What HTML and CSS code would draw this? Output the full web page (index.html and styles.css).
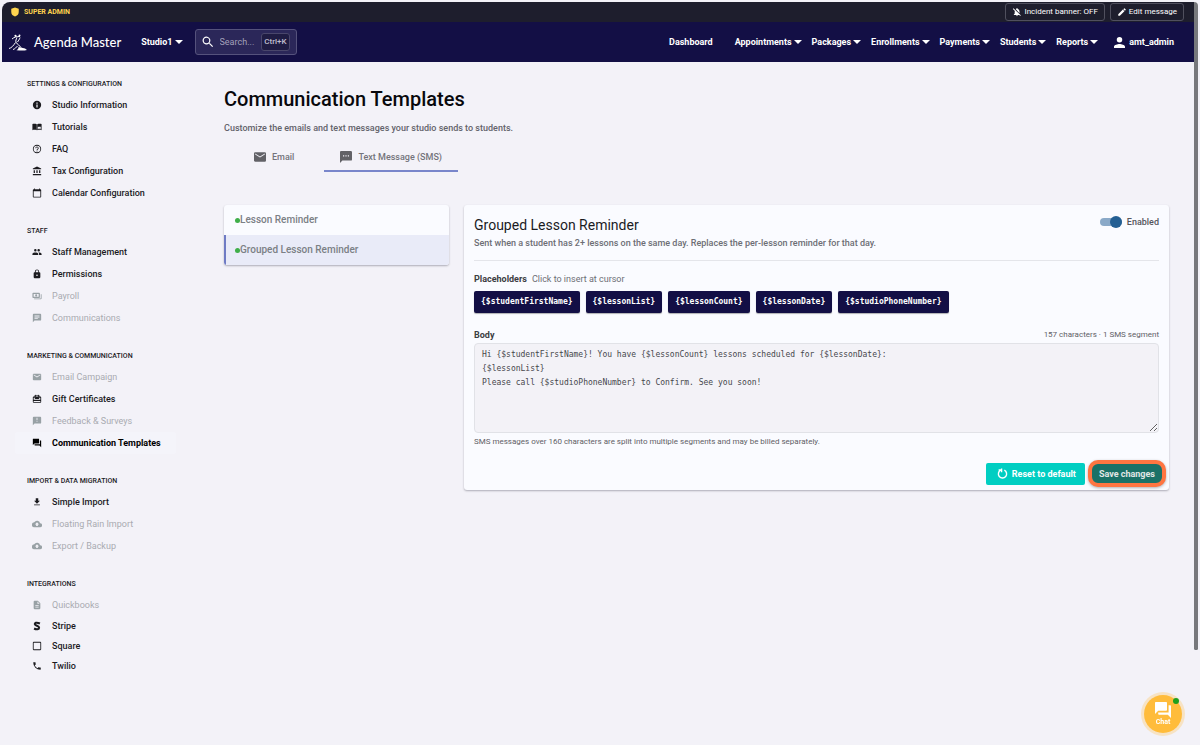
FILE: index.html
```html
<!DOCTYPE html>
<html lang="en">
<head>
<meta charset="utf-8">
<meta name="viewport" content="width=device-width, initial-scale=1">
<title>Communication Templates - Agenda Master</title>
<link rel="stylesheet" href="styles.css">
</head>
<body>
<div class="frame">
  <div class="app">
    <div class="adminbar">
      <span class="role"><svg class="i-shield" viewBox="0 0 24 24"><path d="M12 1 3 4v8c0 6 4 9 9 11 5-2 9-5 9-11V4z"/></svg>SUPER ADMIN</span>
      <div class="admin-actions">
        <button class="admin-btn" type="button"><svg class="i10" viewBox="0 0 24 24"><path d="M12 22a2 2 0 0 0 2-2h-4a2 2 0 0 0 2 2zM18 14.700V11c0-3-1.600-5.600-4.500-6.300V4a1.500 1.500 0 0 0-3 0v.700c-.6.100-1 .300-1.500.500zM3.500 3 2 4.500l5 5c-.4.800-.6 1.600-.6 2.500v4l-2 2v1h13l2.300 2.500L21 20z"/></svg>Incident banner: OFF</button>
        <button class="admin-btn" type="button"><svg class="i10" viewBox="0 0 24 24"><path d="M3 17.200V21h3.800L17.800 9.900l-3.700-3.700zM20.700 7c.4-.4.4-1 0-1.400l-2.300-2.300c-.4-.4-1-.4-1.400 0l-1.800 1.800 3.700 3.700z"/></svg>Edit message</button>
      </div>
    </div>
    <header class="topbar">
      <a class="brand" href="#"><svg class="logo" viewBox="0 0 20 17"><path class="logo-line" d="M1 14.500c2.500-.5 4.500-3 6.500-6M4 5c2.500-2 4-2.500 8-2.500M9 3.500c-1 2-1.500 3-1 5 1.500 1.500 3.500 3 5 5M12 3.500c-.5 2-1.500 3-2.500 4.500M5 15.500c2-.5 3-2 4.500-3.500"/><circle cx="7.500" cy="1.800" r="1.100"/><circle cx="11.500" cy="1.600" r="1"/><path d="M10.500 13c3 1 6 .5 8.500 3-3 .9-7 .6-10.500.2 1.500-.7 2-1.700 2-3.200z"/></svg><span>Agenda Master</span></a>
      <button class="menu studio" type="button">Studio1</button>
      <label class="search"><svg class="i-search" viewBox="2 2 20 20"><path d="M15.500 14h-.8l-.3-.3a6.500 6.500 0 1 0-.7.700l.3.300v.8l5 5 1.500-1.500zm-6 0a4.500 4.500 0 1 1 0-9 4.500 4.500 0 0 1 0 9z"/></svg><input type="text" placeholder="Search..." aria-label="Search"><kbd>Ctrl+K</kbd></label>
      <nav class="nav">
        <a class="dash" href="#">Dashboard</a>
        <button class="menu" type="button">Appointments</button>
        <button class="menu" type="button">Packages</button>
        <button class="menu" type="button">Enrollments</button>
        <button class="menu" type="button">Payments</button>
        <button class="menu" type="button">Students</button>
        <button class="menu" type="button">Reports</button>
        <a class="user" href="#"><svg class="i-user" viewBox="4 4 16 16"><path d="M12 12a4 4 0 1 0 0-8 4 4 0 0 0 0 8zm0 2c-2.700 0-8 1.300-8 4v2h16v-2c0-2.700-5.300-4-8-4z"/></svg>amt_admin</a>
      </nav>
    </header>
    <div class="body">
      <aside class="side">
        <section>
          <h2>SETTINGS &amp; CONFIGURATION</h2>
          <a href="#"><svg viewBox="0 0 24 24"><path fill-rule="evenodd" d="M12 2a10 10 0 1 0 0 20 10 10 0 0 0 0-20zm-1.500 4h3v3h-3zm0 5h3v7h-3z"/></svg>Studio Information</a>
          <a href="#"><svg viewBox="0 0 24 24"><path d="M1 5c3-1 7-1 10.500.500V20C8 18.500 4 18.500 1 19.500z"/><path fill-rule="evenodd" d="M12.500 5.500C16 4 20 4 23 5v14.500c-3-1-7-1-10.500.500zM14 12v5c2-.8 5-.8 7-.4v-5c-2-.4-5-.4-7 .4z"/></svg>Tutorials</a>
          <a href="#"><svg viewBox="0 0 24 24"><path d="M11 18h2v-2h-2zM12 2a10 10 0 1 0 0 20 10 10 0 0 0 0-20zm0 18a8 8 0 1 1 0-16 8 8 0 0 1 0 16zm0-14a4 4 0 0 0-4 4h2a2 2 0 1 1 4 0c0 2-3 1.800-3 5h2c0-2.300 3-2.500 3-5a4 4 0 0 0-4-4z"/></svg>FAQ</a>
          <a href="#"><svg viewBox="0 0 24 24"><path d="M4 10v7h3v-7zm6.500 0v7h3v-7zM2 22h20v-3H2zm15-12v7h3v-7zM12 1 2 6v2h20V6z"/></svg>Tax Configuration</a>
          <a href="#"><svg viewBox="0 0 24 24"><path d="M20 3h-1V1h-2v2H7V1H5v2H4a2 2 0 0 0-2 2v16c0 1.100.9 2 2 2h16a2 2 0 0 0 2-2V5a2 2 0 0 0-2-2zm0 18H4V8h16z"/></svg>Calendar Configuration</a>
        </section>
        <section>
          <h2>STAFF</h2>
          <a href="#"><svg viewBox="0 0 24 24"><path d="M16 11a3 3 0 1 0 0-6 3 3 0 0 0 0 6zm-8 0a3 3 0 1 0 0-6 3 3 0 0 0 0 6zm0 2c-2.300 0-7 1.200-7 3.500V19h14v-2.500C15 14.200 10.300 13 8 13zm8 0-1 .1c1.200.8 2 2 2 3.400V19h6v-2.500c0-2.300-4.700-3.500-7-3.500z"/></svg>Staff Management</a>
          <a href="#"><svg viewBox="0 0 24 24"><path fill-rule="evenodd" d="M18 8h-1V6A5 5 0 0 0 7 6v2H6a2 2 0 0 0-2 2v10c0 1.100.9 2 2 2h12a2 2 0 0 0 2-2V10a2 2 0 0 0-2-2zm-6 9a2 2 0 1 1 0-4 2 2 0 0 1 0 4zM9 8V6a3 3 0 0 1 6 0v2z"/></svg>Permissions</a>
          <a class="off" href="#"><svg viewBox="0 0 24 24"><path fill-rule="evenodd" d="M3 4h14a2 2 0 0 1 2 2v9a2 2 0 0 1-2 2H3a2 2 0 0 1-2-2V6c0-1 1-2 2-2zm1 3v7h12V7zm6 1a2.500 2.500 0 1 1 0 5 2.500 2.500 0 0 1 0-5zM21 8h2v10a2 2 0 0 1-2 2H5v-2h16z"/></svg>Payroll</a>
          <a class="off" href="#"><svg viewBox="0 0 24 24"><path fill-rule="evenodd" d="M4 2h16a2 2 0 0 1 2 2v12a2 2 0 0 1-2 2H6l-4 4V4c0-1 1-2 2-2zm2 4v2h12V6zm0 3v2h12V9zm0 3v2h8v-2z"/></svg>Communications</a>
        </section>
        <section>
          <h2>MARKETING &amp; COMMUNICATION</h2>
          <a class="off" href="#"><svg viewBox="0 0 24 24"><path d="M20 4H4a2 2 0 0 0-2 2v12c0 1.100.9 2 2 2h16a2 2 0 0 0 2-2V6a2 2 0 0 0-2-2zm0 4-8 5-8-5V6l8 5 8-5z"/></svg>Email Campaign</a>
          <a href="#"><svg viewBox="0 0 24 24"><path fill-rule="evenodd" d="M20 6h-2c.4-2-1-4-3-4-1.300 0-2.200.6-3 1.500C11.200 2.600 10.300 2 9 2 7 2 5.600 4 6 6H4a2 2 0 0 0-2 2v11c0 1 1 2 2 2h16c1 0 2-1 2-2V8a2 2 0 0 0-2-2zM9 4h6v2H9zM4 14V9h4l-2 3h12l-2-3h4v5zm0 3h16v2H4z"/></svg>Gift Certificates</a>
          <a class="off" href="#"><svg viewBox="0 0 24 24"><path fill-rule="evenodd" d="M4 2h16a2 2 0 0 1 2 2v12a2 2 0 0 1-2 2H6l-4 4V4c0-1 1-2 2-2zm7 2v6h2V4zm0 8v2h2v-2z"/></svg>Feedback &amp; Surveys</a>
          <a class="current" href="#"><svg viewBox="0 0 24 24"><path d="M21 6h-2v9H6v2c0 .6.400 1 1 1h11l4 4V7c0-.6-.4-1-1-1zm-4 6V3c0-.6-.4-1-1-1H3c-.6 0-1 .4-1 1v14l4-4h10c.6 0 1-.4 1-1z"/></svg>Communication Templates</a>
        </section>
        <section>
          <h2>IMPORT &amp; DATA MIGRATION</h2>
          <a href="#"><svg viewBox="0 0 24 24"><path d="M19 9h-4V3H9v6H5l7 7zM5 18v2h14v-2z"/></svg>Simple Import</a>
          <a class="off" href="#"><svg viewBox="0 0 24 24"><path d="M19.400 10A7.500 7.500 0 0 0 5.400 8 6 6 0 0 0 6 20h13a5 5 0 0 0 .4-10zM14 13v4h-4v-4H7l5-5 5 5z"/></svg>Floating Rain Import</a>
          <a class="off" href="#"><svg viewBox="0 0 24 24"><path d="M19.400 10A7.500 7.500 0 0 0 5.400 8 6 6 0 0 0 6 20h13a5 5 0 0 0 .4-10zM14 13v4h-4v-4H7l5-5 5 5z"/></svg>Export / Backup</a>
        </section>
        <section class="tight">
          <h2>INTEGRATIONS</h2>
          <a class="off" href="#"><svg viewBox="0 0 24 24"><path fill-rule="evenodd" d="M14 2H6a2 2 0 0 0-2 2v16c0 1.100.9 2 2 2h12a2 2 0 0 0 2-2V8zm2 16H8v-2h8zm0-4H8v-2h8zm-3-5V3.500L18.500 9z"/></svg>Quickbooks</a>
          <a href="#"><svg viewBox="0 0 24 24"><path class="s-mark" d="M19 6C10 2 6 5 7 8c1 4 10 3 10 8 0 4-6 5-12 2"/></svg>Stripe</a>
          <a href="#"><svg viewBox="0 0 24 24"><path fill-rule="evenodd" d="M4 2h16a2 2 0 0 1 2 2v16a2 2 0 0 1-2 2H4a2 2 0 0 1-2-2V4c0-1 1-2 2-2zm0 2v16h16V4z"/></svg>Square</a>
          <a href="#"><svg viewBox="0 0 24 24"><path d="M6.600 10.800a15 15 0 0 0 6.600 6.600l2.200-2.200c.3-.3.700-.4 1-.2 1.200.4 2.400.6 3.600.6.600 0 1 .4 1 1V20c0 .6-.4 1-1 1A17 17 0 0 1 3 4c0-.6.4-1 1-1h3.500c.6 0 1 .4 1 1 0 1.300.2 2.500.6 3.600.1.300 0 .7-.3 1z"/></svg>Twilio</a>
        </section>
      </aside>
      <main class="main">
        <h1>Communication Templates</h1>
        <p class="lead">Customize the emails and text messages your studio sends to students.</p>
        <div class="tabs" role="tablist">
          <button class="tab" role="tab" type="button"><svg viewBox="2 2 20 20"><path d="M20 4H4a2 2 0 0 0-2 2v12c0 1.100.9 2 2 2h16a2 2 0 0 0 2-2V6a2 2 0 0 0-2-2zm0 4-8 5-8-5V6l8 5 8-5z"/></svg>Email</button>
          <button class="tab active" role="tab" type="button" aria-selected="true"><svg viewBox="2 2 20 20"><path fill-rule="evenodd" d="M4 2h16a2 2 0 0 1 2 2v12a2 2 0 0 1-2 2H6l-4 4V4c0-1 1-2 2-2zm3 7v2h2V9zm4 0v2h2V9zm4 0v2h2V9z"/></svg>Text Message (SMS)</button>
        </div>
        <div class="columns">
          <div class="card list">
            <button class="row" type="button"><i class="dot"></i>Lesson Reminder</button>
            <button class="row selected" type="button"><i class="dot"></i>Grouped Lesson Reminder</button>
          </div>
          <form class="card editor">
            <div class="editor-head">
              <div>
                <h3>Grouped Lesson Reminder</h3>
                <p>Sent when a student has 2+ lessons on the same day. Replaces the per-lesson reminder for that day.</p>
              </div>
              <label class="switch"><input type="checkbox" checked>Enabled</label>
            </div>
            <div class="hint"><b>Placeholders</b><span>Click to insert at cursor</span></div>
            <div class="chips">
              <button type="button">{$studentFirstName}</button>
              <button type="button">{$lessonList}</button>
              <button type="button">{$lessonCount}</button>
              <button type="button">{$lessonDate}</button>
              <button type="button">{$studioPhoneNumber}</button>
            </div>
            <div class="field-head"><label for="msg">Body</label><span>157 characters · 1 SMS segment</span></div>
            <textarea id="msg" spellcheck="false">Hi {$studentFirstName}! You have {$lessonCount} lessons scheduled for {$lessonDate}:
{$lessonList}
Please call {$studioPhoneNumber} to Confirm. See you soon!</textarea>
            <p class="note">SMS messages over 160 characters are split into multiple segments and may be billed separately.</p>
            <div class="actions">
              <button class="reset" type="button"><svg viewBox="0 0 24 24"><path d="M8 4.800A9 9 0 1 0 16 4.800M10 1v8M3.500 4H10"/></svg>Reset to default</button>
              <button class="save" type="submit">Save changes</button>
            </div>
          </form>
        </div>
      </main>
    </div>
  </div>
  <div class="scrollbar"></div>
</div>
<button class="chat" type="button"><svg viewBox="2 2 20 20"><path d="M21 6h-2v9H6v2c0 .6.400 1 1 1h11l4 4V7c0-.6-.4-1-1-1zm-4 6V3c0-.6-.4-1-1-1H3c-.6 0-1 .4-1 1v14l4-4h10c.6 0 1-.4 1-1z"/></svg>Chat<i class="online"></i></button>
</body>
</html>
```
FILE: styles.css
```css
* { box-sizing: border-box; }
body {
  margin: 0;
  background: #f3f2f8;
  font: 500 9px/12px Roboto, sans-serif;
  color: #1b1b1f;
}
h1, h2, h3, p { margin: 0; }
a { color: inherit; text-decoration: none; }
button, input, textarea { font: inherit; color: inherit; }
button { border: 0; background: none; padding: 0; }
svg { fill: currentColor; flex: none; }

.frame {
  display: flex;
  min-height: 100vh;
  padding: 2px 2px 0;
}
.app { flex: 1; min-width: 0; }
.scrollbar {
  flex: none;
  width: 4px;
  height: 87vh;
  background: #77787c;
  border-radius: 0 8px 3px 3px;
}

.adminbar {
  display: flex;
  align-items: center;
  justify-content: space-between;
  height: 20px;
  padding: 0 10px 0 8px;
  background: #1e1e2d;
  border-radius: 8px 0 0 0;
}
.role {
  display: flex;
  align-items: center;
  gap: 4px;
  color: #ffd54f;
  font-size: 7px;
  font-weight: 700;
}
.i-shield { width: 10px; height: 10px; }
.admin-actions { display: flex; gap: 5px; }
.admin-btn {
  display: flex;
  align-items: center;
  gap: 2px;
  height: 18px;
  padding: 0 6px;
  border: 1px solid #50505e;
  border-radius: 3px;
  color: #fff;
  font-size: 8px;
  font-weight: 400;
}
.i10 { width: 10px; height: 10px; }

.topbar {
  display: flex;
  align-items: center;
  height: 40px;
  padding: 0 20px 0 6px;
  background: #130f45;
  color: #fff;
  font-weight: 700;
}
.brand {
  display: flex;
  align-items: center;
  gap: 6px;
  font: 500 13px/18px Lato, sans-serif;
}
.logo { width: 20px; height: 17px; }
.logo-line { fill: none; stroke: #fff; stroke-width: 1; }
.menu { display: flex; align-items: center; gap: 2px; }
.menu::after {
  content: "";
  border: 4px solid transparent;
  border-top-color: currentColor;
  border-bottom: 0;
}
.studio { margin-left: 20px; }
.search {
  display: flex;
  align-items: center;
  gap: 6px;
  width: 102px;
  height: 26px;
  margin-left: 12px;
  padding: 0 6px;
  border: 1px solid #55527c;
  border-radius: 3px;
  background: #2b2759;
}
.i-search { width: 12px; height: 12px; }
.search input {
  flex: 1;
  min-width: 0;
  width: 0;
  border: 0;
  padding: 0;
  background: none;
  font-weight: 400;
}
.search input::placeholder { color: #a3a1ba; }
.search kbd {
  padding: 2px 2px;
  border: 1px solid #49466b;
  border-radius: 3px;
  background: #1f1c43;
  color: #c0bfd0;
  font: 500 8px/12px Roboto, sans-serif;
}
.nav {
  display: flex;
  align-items: center;
  gap: 10px;
  margin-left: auto;
}
.dash { margin-right: 12px; }
.user { display: flex; align-items: center; gap: 4px; margin-left: 6px; }
.i-user { width: 11px; height: 11px; }

.body { display: flex; align-items: flex-start; }
.side {
  flex: none;
  width: 198px;
  padding: 17px 24px 0 13px;
}
.side section { margin-bottom: 22px; }
.side h2 {
  margin-bottom: 5px;
  padding-left: 12px;
  font-size: 7px;
  line-height: 10px;
  font-weight: 500;
}
.side a {
  display: flex;
  align-items: center;
  gap: 10px;
  height: 22px;
  padding-left: 17px;
  border-radius: 3px;
}
.side svg { width: 10px; height: 10px; }
.side .off { color: #a9abb1; font-weight: 400; }
.side .off svg { color: #98a1a5; }
.side .current { background: #f4f4fa; color: #000; font-weight: 700; }
.side .tight a + a { height: 20px; }
.s-mark { fill: none; stroke: currentColor; stroke-width: 5; }

.main { flex: 1; min-width: 0; padding: 24px 25px 24px 24px; }
h1 { font-size: 20px; line-height: 26px; font-weight: 500; color: #08080c; }
.lead { margin-top: 10px; color: #63636b; }
.tabs { display: flex; margin-top: 8px; }
.tab {
  display: flex;
  align-items: center;
  gap: 6px;
  height: 30px;
  padding: 2px 16px 0;
  border-bottom: 2px solid transparent;
  color: #74747b;
}
.tab:first-child { padding: 2px 30px 0; }
.tab svg { width: 12px; height: 12px; color: #626267; }
.tab.active { border-color: #7986cb; }

.columns {
  display: grid;
  grid-template-columns: 225px 1fr;
  align-items: start;
  gap: 15px;
  margin-top: 33px;
}
.card {
  background: #fafbff;
  border-radius: 3px;
  box-shadow: 0 1px 2px rgba(40, 40, 60, .35);
}
.list { overflow: hidden; }
.row {
  display: flex;
  align-items: center;
  width: 100%;
  height: 30px;
  padding-left: 9px;
  border-left: 2px solid transparent;
  color: #7b8085;
  font-size: 10px;
}
.row.selected { background: #e9ebf8; border-color: #6f7bc4; }
.dot { width: 5px; height: 5px; border-radius: 50%; background: #3fae49; }

.editor { padding: 11px 10px 3px; }
.editor-head {
  display: flex;
  justify-content: space-between;
  align-items: flex-start;
  padding-bottom: 10px;
  border-bottom: 1px solid #e4e5ea;
}
h3 { font-size: 14px; line-height: 18px; font-weight: 400; }
.editor-head p { margin-top: 2px; color: #6d6e75; font-weight: 500; line-height: 14px; }
.switch { display: flex; align-items: center; gap: 5px; color: #55565c; }
.switch input {
  appearance: none;
  display: flex;
  align-items: center;
  justify-content: flex-end;
  width: 22px;
  height: 8px;
  margin: 0;
  border-radius: 4px;
  background: #8aa9c8;
}
.switch input::before {
  content: "";
  width: 12px;
  height: 12px;
  border-radius: 50%;
  background: #245f93;
}
.hint { display: flex; gap: 5px; margin-top: 12px; color: #6d6e75; }
.hint b { color: #3c3d42; }
.hint span { font-weight: 400; }
.chips { display: flex; gap: 6px; margin-top: 6px; }
.chips button {
  height: 22px;
  padding: 0 7px;
  border-radius: 2px;
  background: #130f45;
  color: #fff;
  font: 700 8px/12px "DejaVu Sans Mono", monospace;
  box-shadow: 0 1px 1px rgba(0, 0, 0, .3);
}
.field-head {
  display: flex;
  justify-content: space-between;
  margin-top: 16px;
  color: #5f6066;
  font-size: 8px;
}
.field-head span { font-weight: 400; }
.field-head label { color: #3c3d42; font-size: 9px; font-weight: 700; }
textarea {
  display: block;
  width: 100%;
  height: 90px;
  margin-top: 2px;
  padding: 4px 7px;
  border: 1px solid #e1e2e7;
  border-radius: 4px;
  background: #f3f2f7;
  color: #46474c;
  font: 400 8px/14px "DejaVu Sans Mono", monospace;
  resize: vertical;
}
.note { margin-top: 3px; color: #5f6066; font-size: 8px; line-height: 12px; font-weight: 400; }
.actions {
  display: flex;
  justify-content: flex-end;
  align-items: center;
  gap: 3px;
  margin: 12px -7px 0 0;
}
.reset {
  display: flex;
  align-items: center;
  gap: 4px;
  height: 22px;
  padding: 0 9px 0 11px;
  border-radius: 2px;
  background: #00cec2;
  color: #fff;
  font-weight: 700;
}
.reset svg { width: 11px; height: 11px; fill: none; stroke: currentColor; stroke-width: 3; }
.save {
  height: 27px;
  padding: 0 7px;
  border: 4px solid #ff7541;
  border-radius: 10px;
  background: #1a7167;
  color: #e1e6e5;
  font-weight: 700;
  box-shadow: 0 1px 3px rgba(0, 0, 0, .3);
}

.chat {
  position: fixed;
  right: 18px;
  bottom: 12px;
  display: flex;
  flex-direction: column;
  align-items: center;
  justify-content: center;
  width: 38px;
  height: 38px;
  border-radius: 50%;
  background: #ffbc3b;
  color: #fff;
  font-size: 7px;
  line-height: 8px;
  font-weight: 700;
  box-shadow: 0 0 0 3px #f7e3c4;
}
.chat svg { width: 16px; height: 16px; }
.online {
  position: absolute;
  top: 3px;
  right: 3px;
  width: 6px;
  height: 6px;
  border-radius: 50%;
  background: #1da01d;
}
```
